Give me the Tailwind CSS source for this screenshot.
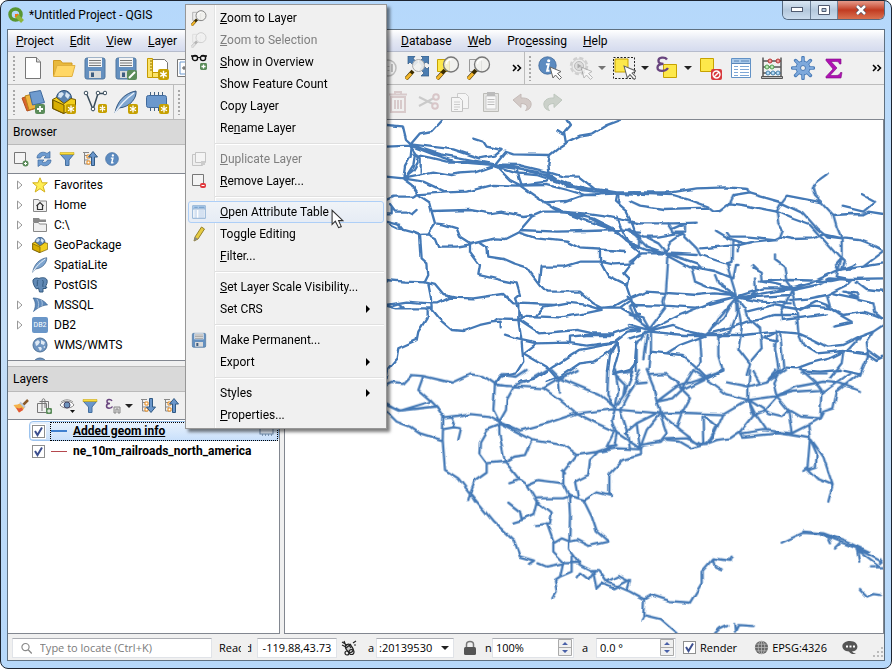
<!DOCTYPE html>
<html lang="en">
<head>
<meta charset="UTF-8" />
<title>*Untitled Project - QGIS</title>
<script src="https://cdn.jsdelivr.net/npm/@tailwindcss/browser@4"></script>
</head>
<body class="h-screen overflow-hidden bg-white text-black text-[12px] leading-4 font-[Roboto,sans-serif]">

<!-- icon library -->
<svg class="hidden">
  <symbol id="star-badge" viewBox="0 0 10 10"><rect width="10" height="10" rx="2" fill="#c6a000"/><path d="M5 1.500v7M2 3.200l6 3.600M8 3.200L2 6.800" stroke="#fff" stroke-width="1.300"/></symbol>
  <symbol id="plus-badge" viewBox="0 0 10 10"><rect width="10" height="10" rx="2" fill="#5b8c5a"/><path d="M5 2v6M2 5h6" stroke="#fff" stroke-width="1.800"/></symbol>
  <symbol id="new" viewBox="0 0 24 24"><path d="M4.500 1.500h11l4 4.500v16.500h-15z" fill="#fff" stroke="#777"/><path d="M15.500 1.500V6h4" fill="#ddd" stroke="#777"/></symbol>
  <symbol id="open" viewBox="0 0 24 24"><path d="M1.500 20V4.500h7l2 2.500h9.500v3" fill="#e8b93c" stroke="#d09a22"/><path d="M1.500 20.500L5 9.500h18L20 20.500z" fill="#ffd766" stroke="#e0b040"/></symbol>
  <symbol id="save" viewBox="0 0 24 24"><rect x="2" y="2" width="20" height="21" rx="2" fill="#6490c0" stroke="#50779f"/><path d="M5 2h14v9H5z" fill="#f4f4f4"/><path d="M6 4.500h12M6 7h12M6 9.500h12" stroke="#777"/><path d="M6 15h12v7H6z" fill="#dadada"/><path d="M8 16.500h3v4.500H8z" fill="#3f5d80"/></symbol>
  <symbol id="saveas" viewBox="0 0 24 24"><use href="#save"/><rect x="13" y="14" width="10" height="10" rx="2" fill="#5b8c5a"/><path d="M15 22l6-6" stroke="#fff" stroke-width="2"/></symbol>
  <symbol id="newlayout" viewBox="0 0 24 24"><path d="M7.500 3.500h12l3 3v13h-15z" fill="#fff" stroke="#777"/><path d="M2.500 2.500h5v19h-5z" fill="#fbe36a" stroke="#c49a00"/><path d="M7.500 16.500h8v5h-8z" fill="#fbe36a" stroke="#c49a00"/><path d="M5 5h2M5 8h2M5 11h2M5 14h2" stroke="#8a6d00"/><use href="#star-badge" x="13" y="13" width="11" height="11"/></symbol>
  <symbol id="layouts" viewBox="0 0 24 24"><path d="M1.500 3.500h20v17h-20z" fill="#fff" stroke="#777"/><path d="M4 6h15v12H4z" fill="none" stroke="#6f9bd0"/><path d="M8 10v4M6 12h4" stroke="#555"/></symbol>
  <symbol id="datasource" viewBox="0 0 24 24"><path d="M1 8l11-3 4 13-10 3z" fill="#d9652c" stroke="#b24f1d"/><path d="M4 6l11-3 3 14-10 3z" fill="#f0b53e" stroke="#b78318"/><path d="M8.500 2.500l11-2 4 12-12 2.500z" fill="#6f9bcf" stroke="#3f699c"/><use href="#plus-badge" x="14" y="14" width="10" height="10"/></symbol>
  <symbol id="geopackage" viewBox="0 0 24 24"><circle cx="12" cy="8" r="7.500" fill="#5b82ae" stroke="#2d4f77"/><path d="M7 3l3-1 2 2-3 4-3-1zM14 2l4 3-2 4-3-3z" fill="#d7e5f3"/><path d="M.5 9.500l4-2 7.500 6 7-5 4.500 1v9l-12 5-11-5z" fill="#f2cf1d" stroke="#6f5600"/><path d="M1 10l11 5v8.500l-11-5z" fill="#d8ae00" stroke="#6f5600"/></symbol>
  <symbol id="newgeo" viewBox="0 0 24 24"><use href="#geopackage"/><use href="#star-badge" x="14" y="14" width="10" height="10"/></symbol>
  <symbol id="vector" viewBox="0 0 24 24"><path d="M3.500 3.500L10 19.500L15 3.500H22" fill="none" stroke="#3a4d5c" stroke-width="1.500"/><g fill="#fff" stroke="#3a4d5c"><circle cx="3" cy="3" r="1.800"/><circle cx="10" cy="19" r="1.800"/><circle cx="15" cy="3" r="1.800"/><circle cx="22" cy="3" r="1.800"/></g><use href="#star-badge" x="15" y="14" width="9" height="9"/></symbol>
  <symbol id="feather" viewBox="0 0 24 24"><path d="M1 23C3 11 11 3 22 1c1 6-5 16-17 17z" fill="#7fa6d0" stroke="#31557f"/><path d="M1 23C7 13 13 8 20 3" stroke="#e9f1fa" fill="none" stroke-width="1.500"/></symbol>
  <symbol id="newfeather" viewBox="0 0 24 24"><use href="#feather"/><use href="#star-badge" x="14" y="14" width="10" height="10"/></symbol>
  <symbol id="memory" viewBox="0 0 24 24"><path d="M5.500 2v19M9.500 2v19M13.500 2v19M17.500 2v19" stroke="#44617f"/><rect x="1.500" y="5.500" width="20" height="12" rx="2" fill="#6b98cd" stroke="#3f699c"/><use href="#star-badge" x="14" y="14" width="10" height="10"/></symbol>
  <symbol id="lens" viewBox="0 0 24 24"><path d="M1 23l8-9" stroke="#3a2c00" stroke-width="4"/><path d="M1 23l5-5.500" stroke="#f4b72a" stroke-width="3"/><circle cx="15" cy="8.500" r="7.500" fill="#f1f1ee" fill-opacity=".8" stroke="#777" stroke-width="1.300"/><path d="M10.500 8c0-3 2-4.500 5-4.500" stroke="#fff" fill="none" stroke-width="1.500"/></symbol>
  <symbol id="zoomfull" viewBox="0 0 24 24"><path d="M3 0h7L8 3l5 3-4 4-4-4-2 2zM24 0v8l-3-2-4 4-3-4 4-4-2-2zM24 20h-8l3-3-4-4 3-4 4 4 2-2z" fill="#4c7db1" stroke="#315983" stroke-width=".7"/><path d="M1 23l7-8" stroke="#3a2c00" stroke-width="4"/><path d="M1 23l5-5.500" stroke="#f4b72a" stroke-width="3"/><circle cx="13.500" cy="9.500" r="6" fill="#f1f1ee" fill-opacity=".9" stroke="#aaa"/></symbol>
  <symbol id="zoomsel" viewBox="0 0 24 24"><path d="M1.500 3.500h12v12h-12z" fill="#fde84a" stroke="#c7a200"/><use href="#lens"/></symbol>
  <symbol id="zoomlayer" viewBox="0 0 24 24"><path d="M2.500 3.500h12v12h-12z" fill="#eee" stroke="#999"/><use href="#lens"/></symbol>
  <symbol id="one" viewBox="0 0 24 24"><circle cx="14" cy="12" r="8" fill="#eee" stroke="#bbb" stroke-width="1.500"/><path d="M11 8v8M18 8v8M14.500 10v1M14.500 14v1" stroke="#bbb" stroke-width="2"/></symbol>
  <symbol id="pointer" viewBox="0 0 12 18"><path d="M1 1v13l3-3 3 6 2.500-1-2.500-5.500h4z" fill="#fff" stroke="#333"/></symbol>
  <symbol id="pointer2" viewBox="0 0 14 14"><path d="M1 1l3 11 2.500-3 4 4.500 2-2L8.500 7.500 12 5.500z" fill="#fff" stroke="#666"/></symbol>
  <symbol id="info" viewBox="0 0 24 24"><circle cx="12" cy="12" r="11" fill="#5c8bc0" stroke="#40699b"/><circle cx="13.500" cy="6" r="2" fill="#fff"/><path d="M10 10.500h3.500l-2 8h3" fill="none" stroke="#fff" stroke-width="2.500"/></symbol>
  <symbol id="identify" viewBox="0 0 24 24"><use href="#info" width="19" height="19"/><use href="#pointer2" x="11" y="10" width="14" height="14"/></symbol>
  <symbol id="cog" viewBox="0 0 24 24"><path d="M12 1.500v21M1.500 12h21M4.600 4.600l14.800 14.800M19.400 4.600L4.600 19.400" stroke="#4a7cb8" stroke-width="3.500" stroke-linecap="round"/><circle cx="12" cy="12" r="7" fill="#7ea9dc" stroke="#4a7cb8"/><path d="M12 2v20M2 12h20M5 5l14 14M19 5L5 19" stroke="#7ea9dc" stroke-width="1.800" stroke-linecap="round"/><circle cx="12" cy="12" r="2.500" fill="#efefef" stroke="#4a7cb8"/></symbol>
  <symbol id="action" viewBox="0 0 24 24"><circle cx="10" cy="10" r="8" fill="#ececec" stroke="#cfcfcf" stroke-width="2.500" stroke-dasharray="4 2.300"/><circle cx="10" cy="10" r="7" fill="#ebebeb" stroke="#cfcfcf"/><circle cx="10" cy="10" r="4.500" fill="#ddd" stroke="#bbb"/><path d="M8.500 7.500l4 2.500-4 2.500z" fill="#aaa"/><g opacity=".4"><use href="#pointer2" x="11" y="10" width="14" height="14"/></g></symbol>
  <symbol id="select" viewBox="0 0 24 24"><path d="M1.500 1.500h21v21h-21z" fill="none" stroke="#222" stroke-dasharray="2 1.500"/><path d="M3 3h13v13H3z" fill="#fde84a" stroke="#c7a200"/><use href="#pointer2" x="11" y="9" width="15" height="15"/></symbol>
  <symbol id="expr" viewBox="0 0 24 24"><path d="M8.500 8.500h13v13h-13z" fill="#fde84a" stroke="#c7a200"/><path d="M12 3.500c-2-3-9-2.500-8.500 1.500 0 2 2 2.800 5 2.800-4 0-6 1.200-6 3.700 0 4.500 8 4.500 10.500.5" fill="none" stroke="#68447e" stroke-width="2.300"/></symbol>
  <symbol id="deselect" viewBox="0 0 24 24"><path d="M2.500 2.500h13v13h-13z" fill="#fde84a" stroke="#c7a200"/><rect x="13" y="13" width="11" height="11" rx="2" fill="#d8393d"/><circle cx="18.500" cy="18.500" r="3.500" fill="none" stroke="#fff" stroke-width="1.400"/><path d="M16 21l5-5" stroke="#fff" stroke-width="1.400"/></symbol>
  <symbol id="table" viewBox="0 0 24 24"><path d="M2.500 2.500h19v19h-19z" fill="#fff" stroke="#6292c6"/><path d="M3 3h18v4H3z" fill="#a9c9ea"/><path d="M3 7.500h18M5 5h5M12 5h8" stroke="#5a86b8"/><path d="M5 10.500h4M11 10.500h9M5 13.500h4M11 13.500h9M5 16.500h4M11 16.500h9M5 19.500h4M11 19.500h9" stroke="#7ea7d6"/></symbol>
  <symbol id="abacus" viewBox="0 0 24 24"><path d="M3 1.500v19M21 1.500v19M3 5h18M3 11h18M3 17h18" stroke="#555" stroke-width="1.500"/><path d="M1.500 20.500h21v2h-21z" fill="#bbb" stroke="#555"/><g fill="#f09a9a" stroke="#b43434"><circle cx="10" cy="5" r="2"/><circle cx="18" cy="5" r="2"/></g><g fill="#bdeabb" stroke="#4f9c4d"><circle cx="7" cy="11" r="2"/><circle cx="12" cy="11" r="2"/></g><g fill="#b8dcf5" stroke="#4783b0"><circle cx="8" cy="17" r="2"/><circle cx="13" cy="17" r="2"/><circle cx="18" cy="17" r="2"/></g></symbol>
  <symbol id="sigma" viewBox="0 0 24 24"><path d="M4 3h15v5h-1.500c-.5-2-1.500-2.500-4-2.500H9l6 6.500-7 7.500h6c3 0 3.500-1 4.500-3H20L19 22H4v-1.500L11 13 4 4.500z" fill="#b012b4" stroke="#7c0c80" stroke-width=".6"/></symbol>
  <symbol id="trash" viewBox="0 0 24 24"><path d="M5 7h14v15H5zM3 4.500h18M9 4V2h6v2M9 10v9M12 10v9M15 10v9" fill="none" stroke="#d8cacb" stroke-width="2"/></symbol>
  <symbol id="cut" viewBox="0 0 24 24"><path d="M2 7l14 7M2 16l15-8" stroke="#cacaca" stroke-width="2"/><g fill="none" stroke="#d8c6c8" stroke-width="2"><circle cx="19" cy="7" r="2.800"/><circle cx="18" cy="16" r="2.800"/></g></symbol>
  <symbol id="copy" viewBox="0 0 24 24"><path d="M9.500 3.500h8l3 3v12h-11z" fill="#f5f5f5" stroke="#ccc"/><path d="M3.500 7.500h8l3 3v11h-11z" fill="#f5f5f5" stroke="#c2c2c2"/><path d="M6 12h6M6 14.500h6M6 17h6M6 19.500h4" stroke="#ccc"/></symbol>
  <symbol id="paste" viewBox="0 0 24 24"><path d="M4.500 3.500h15v18h-15z" fill="#e4e4e2" stroke="#bcbcb8"/><path d="M7 6h10v13H7z" fill="#f8f8f8" stroke="#ccc"/><path d="M8 2h8v4H8z" fill="#bbb"/><path d="M8.500 9.500h7M8.500 12h7M8.500 14.500h7" stroke="#bbb"/></symbol>
  <symbol id="undo" viewBox="0 0 24 24"><path d="M3 10l8-6v4c7-.5 11 3 10 7.500-.5 3-3 4.500-5.500 5 3-3 2-7-4.500-7v4z" fill="#d3cac7" stroke="#c5bbb8"/></symbol>
  <symbol id="redo" viewBox="0 0 24 24"><path d="M21 10l-8-6v4c-7-.5-11 3-10 7.500.5 3 3 4.500 5.500 5-3-3-2-7 4.500-7v4z" fill="#cbd1ca" stroke="#bec7be"/></symbol>
  <symbol id="addbox" viewBox="0 0 16 16"><path d="M1.500 1.500h11v11h-11z" fill="#f4f4f4" stroke="#777"/><circle cx="12.500" cy="12.500" r="3" fill="#5b8c5a"/><path d="M12.500 11v3M11 12.500h3" stroke="#fff"/></symbol>
  <symbol id="rembox" viewBox="0 0 16 16"><path d="M1.500 1.500h11v11h-11z" fill="#f4f4f4" stroke="#777"/><rect x="9" y="10" width="6" height="5" rx="2" fill="#e0383d"/><path d="M10.500 12.500h3" stroke="#fff"/></symbol>
  <symbol id="dupbox" viewBox="0 0 16 16"><path d="M1.500 3.500h10v11h-10z" fill="#eee" stroke="#c4c4c4"/><path d="M4.500 1.500h10v10h-10z" fill="#f4f4f4" stroke="#c4c4c4"/><path d="M10 10h4v4h-4z" fill="#ccc"/></symbol>
  <symbol id="refresh" viewBox="0 0 16 16"><path d="M1 7c0-5 6-7.500 10-4.500L14 .5V7H8l2-2C7.500 4 5 5 4.500 7zM15 9c0 5-6 7.500-10 4.500l-3 2V9h6l-2 2c2.500 1 5 0 5.500-2z" fill="#6d9bd0" stroke="#3c699e" stroke-width=".7"/></symbol>
  <symbol id="filter" viewBox="0 0 16 16"><path d="M1 3h14L10 9v5.500H6.500V9z" fill="#6a96cb" stroke="#44709f"/><path d="M1 1.500h14v2H1z" fill="#fbdc3c" stroke="#c5a000" stroke-width=".5"/></symbol>
  <symbol id="collapse" viewBox="0 0 16 16"><path d="M2.500 1v12h5M2.500 4.500h4M2.500 9h4M1 1.500h6" fill="none" stroke="#888"/><path d="M5 4h3v3H5zM5 10h3v3H5z" fill="#fff" stroke="#e88a1a"/><path d="M11 .5L15.500 6h-3v8.500h-3V6h-3z" fill="#6a96cb" stroke="#315983"/></symbol>
  <symbol id="expand" viewBox="0 0 16 16"><path d="M2.500 1v12h5M2.500 4.500h4M2.500 9h4M1 1.500h6" fill="none" stroke="#888"/><path d="M5 4h3v3H5zM5 10h3v3H5z" fill="#fff" stroke="#e88a1a"/><path d="M11 14.500L15.500 9h-3V.5h-3V9h-3z" fill="#6a96cb" stroke="#315983"/></symbol>
  <symbol id="star" viewBox="0 0 16 16"><path d="M8 .8l2.100 5h5.200l-4.200 3.500 1.700 5.700L8 11.700 3.200 15l1.700-5.700L.7 5.800h5.200z" fill="#ffee54" stroke="#d3b01b"/></symbol>
  <symbol id="home" viewBox="0 0 16 16"><path d="M1.500 14.500v-12h5l1 1.500h7v10.500z" fill="#f0f0f0" stroke="#888"/><path d="M4.500 9L8 5.500 11.500 9M5.500 8.500v4h5v-4" fill="none" stroke="#333" stroke-width="1.200"/></symbol>
  <symbol id="folder" viewBox="0 0 16 16"><path d="M1 1h6l1 1.500h6V5H1z" fill="#888"/><path d="M1.500 14.500v-9h5l1 1.500h7v7.500z" fill="#f0f0f0" stroke="#888"/></symbol>
  <symbol id="elephant" viewBox="0 0 16 16"><path d="M1 3c1-2 4-2.500 6-1.500C10 0 14 .5 15 3c.7 2-.3 5-2 7h2l-1 1.500h-3V15H7.500l-1-4-2 1C2.500 10 .5 6 1 3z" fill="#6189b5" stroke="#33597f"/><path d="M6 3C4.500 5 6 7 5 9M10.500 3c2 2-.5 4 .5 7" fill="none" stroke="#33597f"/></symbol>
  <symbol id="mssql" viewBox="0 0 16 16"><path d="M1 1c5 0 11 2 14.500 7-4 0-9 2-14 6.500C4 10 4 5 1 1z" fill="#5f8abb" stroke="#3a628f" stroke-width=".7"/><path d="M5 2c2 3 2 6 1 9M9 3c1.500 2 1.500 4 .8 6" fill="none" stroke="#bcd0e6" stroke-width=".8"/></symbol>
  <symbol id="globe" viewBox="0 0 16 16"><circle cx="8" cy="8" r="7" fill="#7096c2" stroke="#4d7198"/><path d="M3 5l3-2 2 2-2 3-2 1zM9 3l4 2-1 3-3-1zM6 10l3 0 1 2-2 2zM11 10l2-1 0 2z" fill="#e0eaf4"/></symbol>
  <symbol id="brush" viewBox="0 0 16 16"><path d="M10 7l5-5" stroke="#8a5a2a" stroke-width="2.500"/><path d="M.5 7l4-.5L8 5l4 4-2 3-4 2.500z" fill="#f4b24a"/><path d="M3 9.500l3 1 3-1 1 2.500-4 2.500z" fill="#e0563c"/><path d="M7 4.500l5 5" stroke="#b9c8d8" stroke-width="2"/></symbol>
  <symbol id="group" viewBox="0 0 16 16"><path d="M1.500 5.500h9v9h-9zM3.500 3.500h9v9M6 13V3c0-3 3-3 3 0v7" fill="none" stroke="#777"/><use href="#plus-badge" x="10" y="10" width="6" height="6"/></symbol>
  <symbol id="eye" viewBox="0 0 16 16"><path d="M1 7c3-5 11-5 14 0-3 4-11 4-14 0z" fill="#fff" stroke="#888"/><circle cx="8" cy="7" r="3" fill="#6d93bd" stroke="#446"/><path d="M2 4c4-3 8-3 12 0" fill="none" stroke="#999"/><path d="M11 12h5l-2.500 3z" fill="#111"/></symbol>
  <symbol id="exprfilter" viewBox="0 0 16 16"><path d="M7 3C6 1 1.500 1 2 3.500 2 5 4 5.500 5 5.500 3 5.500 1.500 6.500 1.500 8c0 3 5 2.500 6 .5" fill="none" stroke="#68447e" stroke-width="1.500"/><path d="M9 15V9h6v6h-2v-4h-2v4z" fill="#ddd" stroke="#888"/></symbol>
  <symbol id="pencil" viewBox="0 0 16 16"><path d="M4 11L10.500 1l3 2L7 13l-4 2z" fill="#e6cb42" stroke="#94812b"/><path d="M4 11l3 2-4 2z" fill="#888"/></symbol>
  <symbol id="glasses" viewBox="0 0 16 16"><path d="M0 2h6M10 2h6" stroke="#111" stroke-width="1.500"/><circle cx="4" cy="4" r="2.600" fill="none" stroke="#111" stroke-width="1.400"/><circle cx="12" cy="4" r="2.600" fill="none" stroke="#111" stroke-width="1.400"/><path d="M6.500 3.500h3" stroke="#111"/><use href="#plus-badge" x="9" y="9" width="7" height="7"/></symbol>
  <symbol id="down" viewBox="0 0 8 8"><path d="M0 2h8L4 6z" fill="#222"/></symbol>
  <symbol id="right" viewBox="0 0 8 8"><path d="M2 0v8l4-4z" fill="#000"/></symbol>
  <symbol id="twist" viewBox="0 0 8 10"><path d="M1.500 1v8l4.500-4z" fill="#fff" stroke="#999"/></symbol>
  <symbol id="tick" viewBox="0 0 13 13"><path d="M3 6l2.500 4L10 2.500" fill="none" stroke="#3c4f8f" stroke-width="2"/></symbol>
  <symbol id="more" viewBox="0 0 10 8"><path d="M1 1l3 3-3 3M5.500 1l3 3-3 3" fill="none" stroke="#000" stroke-width="1.500"/></symbol>
</svg>

<div class="relative flex h-full flex-col rounded-lg border border-[#1c2430] bg-linear-to-b from-[#b5d8fb] via-[#c4def7] to-[#b6d8fa] px-[6px] pb-[7px]">

  <!-- title bar -->
  <header class="flex h-[28px] shrink-0 items-center">
    <svg class="ml-px size-4" viewBox="0 0 16 16"><circle cx="7.500" cy="7.500" r="5.500" fill="none" stroke="#589632" stroke-width="3.500"/><path d="M8 8l6.500 6.500" stroke="#8cb63c" stroke-width="4"/><path d="M7 7h4l-4 4z" fill="#ee7913"/></svg>
    <h1 class="ml-[5px]">*Untitled Project - QGIS</h1>
    <div class="ml-auto flex h-[19px] self-start overflow-hidden rounded-b-md border border-t-0 border-[#55687e]">
      <button aria-label="Minimize" class="grid w-[28px] place-items-center border-r border-[#6d8198] bg-linear-to-b from-[#dbe8f4] via-[#b4c8dc] to-[#cbdcee]"><svg class="h-[6px] w-[12px]"><rect x=".5" y=".5" width="11" height="4" fill="#fff" stroke="#515b70"/></svg></button>
      <button aria-label="Maximize" class="grid w-[27px] place-items-center border-r border-[#6d8198] bg-linear-to-b from-[#dbe8f4] via-[#b4c8dc] to-[#cbdcee]"><svg class="h-[10px] w-[12px]"><path d="M.5.5h11v9H.5zM4 3.500h4v3H4z" fill="#fff" stroke="#515b70" fill-rule="evenodd"/></svg></button>
      <button aria-label="Close" class="grid w-[46px] place-items-center bg-linear-to-b from-[#e59a8a] via-[#c13a20] to-[#d9704f]"><svg class="h-[10px] w-[12px]" viewBox="0 0 12 10"><path d="M2 1l8 8M10 1L2 9" stroke="#4b4858" stroke-width="4"/><path d="M2 1l8 8M10 1L2 9" stroke="#fff" stroke-width="2.500"/></svg></button>
    </div>
  </header>

  <div class="flex min-h-0 grow flex-col border border-[#5f7080] bg-[#f0f0f0]">
    <!-- menu bar -->
    <nav class="flex h-[22px] shrink-0 items-center border-b border-[#b6bccc] bg-linear-to-b from-white via-[#e4e8f3] to-[#d5dbee] pl-2">
      <div class="flex w-[385px] gap-4">
        <button><u>P</u>roject</button>
        <button><u>E</u>dit</button>
        <button><u>V</u>iew</button>
        <button><u>L</u>ayer</button>
      </div>
      <div class="flex gap-4">
        <button><u>D</u>atabase</button>
        <button><u>W</u>eb</button>
        <button>Pro<u>c</u>essing</button>
        <button><u>H</u>elp</button>
      </div>
    </nav>

    <!-- toolbars -->
    <div class="flex h-[33px] shrink-0 items-center border-b border-[#bcbcbc]">
      <i class="ml-1 mr-px h-[26px] w-1 bg-[radial-gradient(circle,#a8a8a8_1px,transparent_1px)] bg-size-[4px_4px]"></i>
      <div class="flex w-[353px]">
        <button aria-label="New" class="grid w-[31px] place-items-center"><svg class="size-6"><use href="#new"/></svg></button>
        <button aria-label="Open" class="grid w-[31px] place-items-center"><svg class="size-6"><use href="#open"/></svg></button>
        <button aria-label="Save" class="grid w-[31px] place-items-center"><svg class="size-6"><use href="#save"/></svg></button>
        <button aria-label="Save as" class="grid w-[31px] place-items-center"><svg class="size-6"><use href="#saveas"/></svg></button>
        <button aria-label="New layout" class="grid w-[31px] place-items-center"><svg class="size-6"><use href="#newlayout"/></svg></button>
        <button aria-label="Layouts" class="grid w-[31px] place-items-center"><svg class="size-6"><use href="#layouts"/></svg></button>
      </div>
      <div class="flex">
        <button aria-label="Native resolution" class="grid w-[31px] place-items-center"><svg class="size-6"><use href="#one"/></svg></button>
        <button aria-label="Zoom full" class="grid w-[31px] place-items-center"><svg class="size-6"><use href="#zoomfull"/></svg></button>
        <button aria-label="Zoom to selection" class="grid w-[31px] place-items-center"><svg class="size-6"><use href="#zoomsel"/></svg></button>
        <button aria-label="Zoom to layer" class="grid w-[31px] place-items-center"><svg class="size-6"><use href="#zoomlayer"/></svg></button>
      </div>
      <button aria-label="More" class="ml-[18px]"><svg class="h-2 w-[10px]"><use href="#more"/></svg></button>
      <i class="ml-[2px] h-full w-px bg-[#bcbcbc]"></i>
      <i class="ml-[3px] mr-[2px] h-[26px] w-1 bg-[radial-gradient(circle,#a8a8a8_1px,transparent_1px)] bg-size-[4px_4px]"></i>
      <div class="flex">
        <button aria-label="Identify" class="grid w-[31px] place-items-center"><svg class="size-6"><use href="#identify"/></svg></button>
        <button aria-label="Action" class="grid w-[31px] place-items-center"><svg class="size-6"><use href="#action"/></svg></button>
        <button aria-label="Action menu" class="grid w-[12px] place-items-center opacity-60"><svg class="size-2"><use href="#down"/></svg></button>
        <button aria-label="Select" class="grid w-[31px] place-items-center"><svg class="size-6"><use href="#select"/></svg></button>
        <button aria-label="Select menu" class="grid w-[12px] place-items-center"><svg class="size-2"><use href="#down"/></svg></button>
        <button aria-label="Select by expression" class="grid w-[31px] place-items-center"><svg class="size-6"><use href="#expr"/></svg></button>
        <button aria-label="Expression menu" class="grid w-[12px] place-items-center"><svg class="size-2"><use href="#down"/></svg></button>
        <button aria-label="Deselect" class="grid w-[31px] place-items-center"><svg class="size-6"><use href="#deselect"/></svg></button>
        <button aria-label="Attribute table" class="grid w-[31px] place-items-center"><svg class="size-6"><use href="#table"/></svg></button>
        <button aria-label="Field calculator" class="grid w-[31px] place-items-center"><svg class="size-6"><use href="#abacus"/></svg></button>
        <button aria-label="Processing toolbox" class="grid w-[31px] place-items-center"><svg class="size-6"><use href="#cog"/></svg></button>
        <button aria-label="Statistics" class="grid w-[31px] place-items-center"><svg class="size-6"><use href="#sigma"/></svg></button>
      </div>
      <button aria-label="More" class="ml-auto mr-[2px]"><svg class="h-2 w-[10px]"><use href="#more"/></svg></button>
    </div>
    <div class="flex h-[34px] shrink-0 items-center">
      <i class="ml-1 mr-px h-[26px] w-1 bg-[radial-gradient(circle,#a8a8a8_1px,transparent_1px)] bg-size-[4px_4px]"></i>
      <div class="flex">
        <button aria-label="Data source manager" class="grid w-[31px] place-items-center"><svg class="size-6"><use href="#datasource"/></svg></button>
        <button aria-label="New GeoPackage" class="grid w-[31px] place-items-center"><svg class="size-6"><use href="#newgeo"/></svg></button>
        <button aria-label="New shapefile" class="grid w-[31px] place-items-center"><svg class="size-6"><use href="#vector"/></svg></button>
        <button aria-label="New SpatiaLite" class="grid w-[31px] place-items-center"><svg class="size-6"><use href="#newfeather"/></svg></button>
        <button aria-label="New scratch layer" class="grid w-[31px] place-items-center"><svg class="size-6"><use href="#memory"/></svg></button>
      </div>
      <i class="ml-px h-full w-px bg-[#bcbcbc]"></i>
      <i class="ml-[3px] h-[26px] w-1 bg-[radial-gradient(circle,#a8a8a8_1px,transparent_1px)] bg-size-[4px_4px]"></i>
      <div class="ml-[201px] flex">
        <button disabled aria-label="Delete" class="grid w-[31px] place-items-center"><svg class="size-6"><use href="#trash"/></svg></button>
        <button disabled aria-label="Cut" class="grid w-[31px] place-items-center"><svg class="size-6"><use href="#cut"/></svg></button>
        <button disabled aria-label="Copy" class="grid w-[31px] place-items-center"><svg class="size-6"><use href="#copy"/></svg></button>
        <button disabled aria-label="Paste" class="grid w-[31px] place-items-center"><svg class="size-6"><use href="#paste"/></svg></button>
        <button disabled aria-label="Undo" class="grid w-[31px] place-items-center"><svg class="size-6"><use href="#undo"/></svg></button>
        <button disabled aria-label="Redo" class="grid w-[31px] place-items-center"><svg class="size-6"><use href="#redo"/></svg></button>
      </div>
    </div>

    <main class="flex min-h-0 grow gap-1">
      <!-- docks -->
      <aside class="flex w-[272px] shrink-0 flex-col">
        <section class="flex h-[242px] shrink-0 flex-col">
          <h2 class="flex h-[26px] shrink-0 items-center border-t border-b border-[#bababa] bg-[#d9d9d9] pl-[5px]">Browser</h2>
          <div class="flex h-[28px] shrink-0 items-center gap-[7px] pl-[5px]">
            <button aria-label="Add layer"><svg class="size-4"><use href="#addbox"/></svg></button>
            <button aria-label="Refresh"><svg class="size-4"><use href="#refresh"/></svg></button>
            <button aria-label="Filter"><svg class="size-4"><use href="#filter"/></svg></button>
            <button aria-label="Collapse all"><svg class="size-4"><use href="#collapse"/></svg></button>
            <button aria-label="Properties"><svg class="size-[14px]"><use href="#info"/></svg></button>
          </div>
          <ul class="min-h-0 grow overflow-hidden border border-l-0 border-[#828790] bg-white pt-px">
            <li class="flex h-5 items-center pl-2"><svg class="mr-[8px] h-[10px] w-2"><use href="#twist"/></svg><svg class="mr-[6px] size-4"><use href="#star"/></svg>Favorites</li>
            <li class="flex h-5 items-center pl-2"><svg class="mr-[8px] h-[10px] w-2"><use href="#twist"/></svg><svg class="mr-[6px] size-4"><use href="#home"/></svg>Home</li>
            <li class="flex h-5 items-center pl-2"><svg class="mr-[8px] h-[10px] w-2"><use href="#twist"/></svg><svg class="mr-[6px] size-4"><use href="#folder"/></svg>C:\</li>
            <li class="flex h-5 items-center pl-2"><svg class="mr-[8px] h-[10px] w-2"><use href="#twist"/></svg><svg class="mr-[6px] size-4"><use href="#geopackage"/></svg>GeoPackage</li>
            <li class="flex h-5 items-center pl-6"><svg class="mr-[6px] size-4"><use href="#feather"/></svg>SpatiaLite</li>
            <li class="flex h-5 items-center pl-6"><svg class="mr-[6px] size-4"><use href="#elephant"/></svg>PostGIS</li>
            <li class="flex h-5 items-center pl-2"><svg class="mr-[8px] h-[10px] w-2"><use href="#twist"/></svg><svg class="mr-[6px] size-4"><use href="#mssql"/></svg>MSSQL</li>
            <li class="flex h-5 items-center pl-2"><svg class="mr-[8px] h-[10px] w-2"><use href="#twist"/></svg><span class="mr-[6px] grid size-4 place-items-center rounded-xs bg-[#6a96c8] text-[7px] leading-none text-white">DB2</span>DB2</li>
            <li class="flex h-5 items-center pl-6"><svg class="mr-[6px] size-4"><use href="#globe"/></svg>WMS/WMTS</li>
            <li class="flex h-5 items-center pl-6"><svg class="mr-[6px] size-4"><use href="#globe"/></svg></li>
          </ul>
        </section>
        <section class="mt-[5px] flex min-h-0 grow flex-col">
          <h2 class="flex h-[26px] shrink-0 items-center border-t border-b border-[#bababa] bg-[#d9d9d9] pl-[5px]">Layers</h2>
          <div class="flex h-[27px] shrink-0 items-center gap-[7px] pl-[5px]">
            <button aria-label="Style"><svg class="size-4"><use href="#brush"/></svg></button>
            <button aria-label="Add group"><svg class="size-4"><use href="#group"/></svg></button>
            <button aria-label="Visibility"><svg class="size-4"><use href="#eye"/></svg></button>
            <button aria-label="Filter"><svg class="size-4"><use href="#filter"/></svg></button>
            <button aria-label="Filter by expression" class="flex items-center gap-1"><svg class="size-4"><use href="#exprfilter"/></svg><svg class="size-2"><use href="#down"/></svg></button>
            <button aria-label="Expand all"><svg class="size-4"><use href="#expand"/></svg></button>
            <button aria-label="Collapse all"><svg class="size-4"><use href="#collapse"/></svg></button>
          </div>
          <ul class="min-h-0 grow border border-l-0 border-[#828790] bg-white pt-px pl-[21px] font-bold">
            <li class="flex h-5 items-center rounded-sm border border-[#9cc3ee] bg-linear-to-b from-[#e9f2fc] to-[#c9e0fb] pl-[2px]">
              <label class="grid size-[13px] place-items-center">
                <input type="checkbox" checked aria-label="Added geom info" class="size-[13px] appearance-none border border-[#8e8f8f] bg-white outline outline-white [grid-area:1/1]" />
                <svg class="size-[13px] [grid-area:1/1]"><use href="#tick"/></svg>
              </label>
              <div class="ml-[5px] flex h-[19px] grow items-center border border-dotted border-black">
                <i class="h-[2px] w-4 bg-[#3f80d0]"></i><span class="ml-[6px] underline">Added geom info</span>
                <svg class="ml-auto mr-[3px] h-3 w-[15px]" viewBox="0 0 15 12"><path d="M3.500 1v10M6.500 1v10M9.500 1v10M12.500 1v10" stroke="#7d97b5"/><rect x="1" y="2" width="13" height="7" fill="#dfe9f6" stroke="#6b86a6"/></svg>
              </div>
            </li>
            <li class="flex h-5 items-center pl-[3px]">
              <label class="grid size-[13px] place-items-center">
                <input type="checkbox" checked aria-label="ne_10m_railroads_north_america" class="size-[13px] appearance-none border border-[#8e8f8f] bg-white [grid-area:1/1]" />
                <svg class="size-[13px] [grid-area:1/1]"><use href="#tick"/></svg>
              </label>
              <i class="ml-[6px] h-px w-4 bg-[#b5484e]"></i><span class="ml-[6px]">ne_10m_railroads_north_america</span>
            </li>
          </ul>
        </section>
      </aside>

      <!-- map canvas -->
      <section class="min-w-0 grow border border-[#828790] bg-white">
        <svg class="size-full" viewBox="285 120 598 513" preserveAspectRatio="xMinYMin slice" fill="none" stroke="#4479b6" stroke-width="7" stroke-linejoin="round" stroke-linecap="round">
          <filter id="rough" filterUnits="userSpaceOnUse" x="285" y="120" width="598" height="513" color-interpolation-filters="sRGB">
            <feTurbulence type="fractalNoise" baseFrequency=".09" numOctaves="1" seed="4"/>
            <feDisplacementMap in="SourceGraphic" scale="5" xChannelSelector="R" yChannelSelector="G"/>
          </filter>
          <g filter="url(#rough)">
            <!-- north west -->
            <path transform="translate(380 115) scale(.3333)" d="M18 30L68 34 78 75 92 88 120 55 155 48 185 15M18 95L92 92M92 88L220 103 300 130 345 122 365 105 320 95 310 80 280 70M92 90L180 118 240 128 345 148M92 92L160 118 225 140 280 145 345 150M100 118L150 128 200 140 260 138 345 150M92 95L108 118 122 130 122 172M95 95L92 125 75 155 70 190M105 118L100 150 75 190M110 118L115 140 100 165 72 188L120 178 160 170 215 180 240 175 285 172 345 152M18 185L70 190 130 200 200 232M70 192L95 210 115 240 148 262 155 290 165 325 142 358 120 360M18 255L40 245 100 245 110 238 200 232 260 230 340 210 420 212M30 270L45 290 80 290 95 298 110 285M18 295L35 295 35 280M18 320L60 330 72 345 100 352 120 360M30 330L50 340 70 342 50 325M155 288L270 285 330 295 365 290 430 303 455 300M165 325L190 328 230 340 240 365 275 388M142 358L165 370 175 395 230 395 270 388 345 370 375 372 415 352 455 305 490 290 545 290 610 295 680 305 780 325M345 148L375 110 400 118 510 120 505 145 510 185 500 200 420 210 390 195 360 165 345 148M510 120L535 100 558 85 552 50 570 30 560 15M532 48L548 58M558 82L600 62 640 55 680 30 720 15M345 148L415 150 500 170 550 185 600 185 645 220M345 150L420 160 510 180 560 215 645 222 710 232 780 232M345 152L400 160 480 175 560 205 640 225M345 155L410 175 470 180 560 210 600 225 700 235 780 240M410 165L425 210M420 212L500 210 560 225 610 240 780 232M420 212L460 240 520 280 600 310 700 345 780 350M490 262L560 258 610 240 650 240 700 232M520 280L560 295 640 310 700 340 740 380 780 395M540 295L610 300 700 345 765 400M710 235L705 260 740 290 755 320 765 350 780 370M715 232L715 265M710 305L725 345 745 380 780 410M420 345L530 350 620 348 720 345M415 352L470 370 560 380 600 400 680 405 735 408M660 403L660 440 685 485 740 512M480 500L485 455 550 455 600 440 660 440 700 448 760 445M780 415L745 455 730 475 745 490 740 515 755 560 780 620M270 388L270 410 300 450 295 480 360 495 410 505 420 540 408 550 415 570 415 610M300 385L322 400 325 425 370 432 400 445 440 458 480 510 500 530 600 530 640 565 665 578M120 360L125 430 142 445 145 480 135 500M18 495L75 500 135 502 165 510 190 540 230 548M18 570L80 560 150 565 175 565 210 548 280 550 370 537 400 565M18 572L50 580 155 580M40 570L55 565 68 575 50 580M145 505L152 540 155 580 140 585 140 610 115 650 110 675 55 700 50 730 25 760 20 790M155 585L175 610 215 645 250 648 300 630 335 622 350 610 415 612M335 622L362 620 362 640M400 565L520 570 560 563 610 568 650 580 700 575 745 550 780 535M470 600L490 575 520 570M415 612L440 603 540 607 600 598 665 585M410 570L425 610M415 612L480 655 590 645 640 655 700 655 745 640 780 640M415 612L425 680 430 740 408 775 360 785 345 810M375 662L400 670 470 685 560 683 620 692 710 680M570 685L570 665 620 660 700 660M430 715L470 685M430 715L500 755 530 790M420 800L470 790 520 755 600 705 700 685 745 650 780 645M500 800L540 785 600 745 640 740 690 710 710 685M665 578L720 578 745 560 755 555M725 580L760 600 780 600M740 545L770 575M710 685L690 720 684 768M710 685L715 715 700 770M700 780L750 765 770 740M770 680L765 740 750 790"/>
            <!-- north east -->
            <path transform="translate(630 115) scale(.3333)" d="M0 232L125 232 200 220 290 217 355 222 360 235 310 243 300 265 270 288 250 290 235 278 100 282 30 272 0 258M0 235L130 240 180 255 235 275M300 265L340 270 440 290M360 235L455 262M440 290L455 262 470 242 575 262M590 178L560 200 548 220 555 243 575 262 610 300 620 335 635 370 635 430 625 465M610 300L660 297 700 298 715 290 760 297M638 275L700 290 735 260 698 240M440 290L445 325 458 345 450 365 435 373M455 265L520 295 560 340 590 365 635 370M440 290L490 312 540 330 590 385 630 430M450 365L490 372 550 370 580 358 635 370 690 375 730 390 760 405M435 373L370 380 330 390 210 400M258 347L300 372 345 385M290 352L300 365 360 365 440 373M310 375L308 440 290 445 300 480 318 540M325 385L323 412M0 325L130 325 200 323M115 325L130 350 165 350 165 325 130 340M155 355L120 380 108 415M155 355L200 400 210 420 300 450M0 345L40 365 85 365 155 352M0 345L50 395 110 415M0 385L50 405 110 415M50 368L85 385 110 415 200 420M0 440L35 415 110 415 200 445 215 460 260 470 310 490M115 425L108 530 100 560 105 580 60 640M0 350L30 370 30 390M110 420L185 460 195 500 230 515 318 540M185 455L255 468 310 490M255 480L265 505 318 540M310 490L318 450 325 450M0 550L50 530 200 540 250 535 318 540M0 570L100 572 200 578 318 545 250 560 150 600 60 645M0 575L15 610 60 645M0 600L40 610 60 645M0 630L55 645M0 670L60 648 130 630 180 650 225 660M60 650L160 660 225 660M318 545L280 610 225 660M318 548L265 610 230 660M318 550L320 600 300 650 265 665M225 660L340 660 440 650 500 655M225 660L300 640 350 620 385 615 430 600 500 600M320 550L335 640 325 700 360 745 350 780M318 545L345 580 350 605 390 640 395 700 365 735M265 665L265 720 280 770M210 665L215 740 195 760M60 650L60 700 55 768M45 650L20 690 20 768M50 660L40 730M60 710L110 715 150 690 225 662M110 715L155 720 195 755 230 790 280 770M325 548L390 560 485 565M320 545L400 520 485 520M330 548L430 530 485 522M340 548L400 545 480 540M370 458L392 470 395 500 440 508 485 520M375 490L378 530 360 545M370 450L380 460M435 418L435 435 462 455 470 500 485 520 540 505 625 465M390 500L480 495 600 498 640 490M490 525L560 510 600 490 660 495M625 465L700 455 760 445M635 463L675 448M625 465L618 450 635 430 645 440 635 465M700 455L760 410M625 465L620 485 655 492 760 490M680 500L710 522 760 528M485 522L500 590 505 650M485 525L455 590 455 615 540 605 590 598M350 590L430 570 500 582 550 575 600 580M480 555L540 550 590 540 600 575M510 585L560 560 600 575M590 540L650 510 665 495M600 580L630 600 665 620 610 632M600 580L640 600 700 590 735 600 760 610M610 535L680 550 650 530M640 530L680 535 685 555 730 565 735 590 760 610M505 655L540 670 590 695 640 690 690 665 730 650M440 650L400 670 440 680M440 645L435 700 445 760M450 650L455 700 460 755M505 655L520 690 560 715 640 708 710 718M730 650L710 680 715 720 690 780M730 650L760 630M710 715L740 735 760 725M715 705L750 730M640 710L600 730 540 745 500 760 460 757 420 790M510 765L570 770 630 765M640 708L635 745 600 790M690 665L650 710M690 775L640 765"/>
            <!-- south -->
            <path transform="translate(380 370) scale(.3333)" d="M20 45L35 38 70 42 95 15 130 18 215 38 270 13 310 18 345 42 380 48M130 18L115 60 150 90 170 110 190 140M20 100L60 122 150 95M20 105L55 122 165 110M20 125L50 155 90 170 120 190 185 210M190 140L188 210 195 300 235 325 270 370M190 145L235 140 270 132 325 138 358 155M215 145L225 172 190 178M225 172L243 175 235 210M345 42L340 120 358 155M345 42L365 15 410 20 440 0M358 155L378 120 380 90 405 45 440 35 500 0M345 45L490 55 540 25 515 0M540 25L590 0M490 55L540 90 590 130 650 160 705 185M540 25L660 75 705 110M535 25L540 65M358 155L420 182 500 160 590 130 700 118M358 155L358 190 375 275M358 160L455 210 550 225 590 255 655 245 710 235 780 238M358 165L320 180 300 215 298 250 320 280 375 275M455 210L435 255 400 260 375 275M320 280L320 305 285 330 270 370M265 390L270 370 285 395M270 370L340 455 400 510 420 560 465 572 450 582M375 275L420 330 440 345 470 395M385 340L415 330M440 345L475 330 550 340M590 255L550 305 550 340 570 385M545 300L555 310M655 245L630 270 625 315 585 335 595 385M470 385L550 385 570 378 615 390 650 367 698 378M698 378L688 370 688 315 730 270 780 255 780 238M470 395L460 435 425 450 400 458M385 398L420 425 425 450M470 395L515 430 510 460 468 465M500 460L520 515 520 545 550 575M520 520L545 505 570 515 590 510 625 528 685 515 650 485 635 440 610 390M567 385L570 440 567 540 600 585 640 605M475 580L500 590 550 580 600 578M550 575L540 620 525 630 530 665 520 682M540 620L575 605 575 560M590 622L600 608 625 628 645 600M640 605L650 655 665 640 700 655 750 630M635 600L655 600 680 635 715 650 750 665 792 688M680 635L715 618 750 635 742 660M792 688L815 675 870 693 930 698 965 640 965 605 1000 565 1050 572M1000 570L1005 590 1025 598M1045 572L1055 560M792 688L790 735 840 747 890 790M785 748L792 735M1005 790L1020 775 1042 765M1063 762L1065 785 1075 765 1118 768M1205 518L1270 488 1320 492 1370 512 1430 535 1505 575M1270 485L1330 490 1400 515 1465 545 1440 545M1345 510L1350 520M1365 533L1380 518M1430 535L1438 575M1430 540L1500 592M1470 592L1510 592M1505 565L1500 580M1440 660L1460 680 1480 672 1500 675M705 0L715 60 705 120M685 0L682 75 705 110M705 10L760 5 735 70 715 100M700 10L735 45 730 75M780 0L760 50 740 80 720 120M765 38L800 35M800 0L820 50 830 95 840 130M830 95L880 85 905 60 940 0M830 95L890 50 970 25M805 15L860 12 890 35 905 60 930 85 905 130 890 170M970 25L1010 10 1030 0M940 0L975 25 1040 72 1105 90M970 30L905 62M700 118L840 130 900 128 1030 133 1105 90M705 118L695 150 710 190 705 220M720 120L740 180 750 235M705 185L780 235M650 245L710 225 680 230 700 190M735 190L770 160 830 130M770 160L780 235M840 130L800 180 780 235M840 130L860 190 840 215 780 225M840 130L900 180 960 225M850 208L920 205 970 225M860 212L900 215 935 235 970 225 968 140M975 140L1010 170 980 225M1030 133L1000 200 975 225M970 225L1010 210 1050 205 1080 185 1120 135 1105 90M1080 185L1090 200 1200 190 1290 205M1085 190L1150 180 1235 190 1285 165 1320 145M1105 90L1125 130 1160 180 1290 205M1120 135L1150 125 1190 80M1105 90L1105 50 1040 37M1105 50L1160 35 1190 0M1105 90L1190 78M1110 92L1170 130 1205 138 1225 120M1190 78L1225 120 1260 140 1320 145M1225 120L1235 190M1190 78L1180 40 1200 0M1190 78L1240 65 1320 60M1195 75L1250 50 1330 35 1380 40 1440 63M1320 145L1325 60 1310 40 1265 0M1320 145L1330 125 1360 115 1370 65 1440 10M1325 70L1410 10M1265 10L1340 10M1285 165L1290 205 1283 290 1270 300M1290 205L1310 250 1308 290 1283 298 1310 325 1358 345M1295 210L1330 260 1358 345 1345 395M1110 0L1105 50M1120 5L1140 40M1160 35L1215 0"/>
          </g>
        </svg>
      </section>
    </main>

    <!-- status bar -->
    <footer class="flex h-[26px] shrink-0 items-center pt-px font-['Open_Sans',sans-serif] text-[11px]">
      <label class="ml-1 flex h-5 w-[200px] shrink-0 items-center gap-2 border border-[#e0e3e8] border-t-[#abadb3] bg-white pl-2">
        <svg class="size-3" viewBox="0 0 12 12"><circle cx="5" cy="5" r="4" fill="none" stroke="#888" stroke-width="1.300"/><path d="M8 8l4 4" stroke="#888" stroke-width="1.500"/></svg>
        <input type="text" aria-label="Locate" placeholder="Type to locate (Ctrl+K)" class="w-full placeholder-[#7b7b7b] outline-none" />
      </label>
      <span class="ml-[7px] w-[22px] shrink-0 overflow-hidden">Read</span>
      <span class="ml-[7px] flex w-1 shrink-0 justify-end overflow-hidden">d</span>
      <input type="text" aria-label="Coordinate" value="-119.88,43.73" class="ml-[5px] h-5 w-[80px] border border-[#e0e3e8] border-t-[#abadb3] bg-white text-center" />
      <svg class="ml-1 size-4" viewBox="0 0 16 16" fill="none" stroke="#222" stroke-width="1.200"><path d="M1 2l5 3M1 5l4 2M3 1l2 5M12 3l3-2M13 5h2"/><rect x="5" y="4" width="6" height="9" rx="3" transform="rotate(-35 8 8)" fill="#ccc"/><path d="M5 8l5-4M8 5l2 3"/><circle cx="10.500" cy="12" r="2.500"/><circle cx="6" cy="13" r="2"/></svg>
      <span class="ml-[11px] w-[8px]">a</span>
      <label class="grid h-5 w-[78px] shrink-0 items-center border border-[#e0e3e8] border-t-[#abadb3] bg-white">
        <select aria-label="Scale" class="w-full appearance-none pl-[2px] [grid-area:1/1]"><option>:20139530</option></select>
        <svg class="pointer-events-none mr-1 size-2 justify-self-end [grid-area:1/1]"><use href="#down"/></svg>
      </label>
      <svg class="ml-[10px] h-4 w-3" viewBox="0 0 12 16"><path d="M2.500 8V4.500c0-4 7-4 7 0V8" fill="none" stroke="#777" stroke-width="1.500"/><rect y="7" width="12" height="8" rx="1.500" fill="#555"/></svg>
      <span class="ml-[9px] w-[7px]">n</span>
      <div class="flex h-5 w-[82px] shrink-0 items-center border border-[#e0e3e8] border-t-[#abadb3] bg-white">
        <input type="text" aria-label="Magnifier" value="100%" class="w-0 grow pl-[3px]" />
        <svg class="mr-px h-[17px] w-[14px]" viewBox="0 0 14 17"><path d="M.5.5h13v16H.5zM.5 8.500h13" fill="#f0f0f0" stroke="#aaa"/><path d="M4 6h6L7 3zM4 11h6l-3 3z" fill="#4960a8"/></svg>
      </div>
      <span class="ml-[8px] w-[14px]">a</span>
      <div class="flex h-5 w-[80px] shrink-0 items-center border border-[#e0e3e8] border-t-[#abadb3] bg-white">
        <input type="text" aria-label="Rotation" value="0.0 °" class="w-0 grow pl-[3px]" />
        <svg class="mr-px h-[17px] w-[14px]" viewBox="0 0 14 17"><path d="M.5.5h13v16H.5zM.5 8.500h13" fill="#f0f0f0" stroke="#aaa"/><path d="M4 6h6L7 3zM4 11h6l-3 3z" fill="#4960a8"/></svg>
      </div>
      <label class="ml-[7px] flex items-center gap-1">
        <span class="grid size-[13px]"><input type="checkbox" checked class="size-[13px] appearance-none border border-[#8e8f8f] bg-white [grid-area:1/1]" /><svg class="size-[13px] [grid-area:1/1]"><use href="#tick"/></svg></span>
        Render
      </label>
      <button class="ml-[17px] flex items-center gap-[3px]"><svg class="size-[15px]" viewBox="0 0 16 16"><circle cx="8" cy="8" r="7" fill="#666"/><path d="M1 8h14M8 1v14M2.500 4.500h11M2.500 11.500h11" stroke="#bbb" stroke-width=".8" fill="none"/><ellipse cx="8" cy="8" rx="3.500" ry="7" fill="none" stroke="#bbb" stroke-width=".8"/></svg>EPSG:4326</button>
      <button aria-label="Messages" class="ml-[15px]"><svg class="h-[15px] w-4" viewBox="0 0 16 15"><path d="M8 1c9 0 10 10 2 10.500 1 1 2 2 4 2-3 1.500-6 0-7-2C-2 11 -2 1 8 1z" fill="#555"/><path d="M4 6.500h2M7.500 6.500h2M11 6.500h2" stroke="#fff" stroke-width="1.800"/></svg></button>
      <svg class="ml-auto mt-2 size-3" viewBox="0 0 12 12"><path d="M9 1h2v2H9zM5 5h2v2H5zM9 5h2v2H9zM1 9h2v2H1zM5 9h2v2H5zM9 9h2v2H9z" fill="#bbb"/></svg>
    </footer>
  </div>

  <!-- layer context menu -->
  <div role="menu" class="absolute top-[3px] left-[184px] w-[202px] border border-[#979797] bg-[#f0f0f0] bg-[linear-gradient(90deg,transparent_28px,#e2e3e3_28px,#e2e3e3_29px,#fff_29px,#fff_30px,transparent_30px)] p-[2px] shadow-[3px_3px_3px_rgba(0,0,0,.5)]">
    <button role="menuitem" class="flex h-[22px] w-full items-center pl-[3px]"><svg class="mr-[13px] size-4"><use href="#zoomlayer"/></svg><span><u>Z</u>oom to Layer</span></button>
    <button role="menuitem" disabled class="flex h-[22px] w-full items-center pl-[3px] text-[#7f7f7f]"><svg class="mr-[13px] size-4 opacity-30 grayscale"><use href="#zoomlayer"/></svg><span><u>Z</u>oom to Selection</span></button>
    <button role="menuitem" class="flex h-[22px] w-full items-center pl-[3px]"><svg class="mr-[13px] size-4"><use href="#glasses"/></svg><span><u>S</u>how in Overview</span></button>
    <button role="menuitem" class="flex h-[22px] w-full items-center pl-[32px]">Show Feature Count</button>
    <button role="menuitem" class="flex h-[22px] w-full items-center pl-[32px]">Copy Layer</button>
    <button role="menuitem" class="flex h-[22px] w-full items-center pl-[32px]"><span>Re<u>n</u>ame Layer</span></button>
    <hr class="mt-1 mb-[3px] ml-[27px] border-t border-b border-[#e0e0e0] border-b-white" />
    <button role="menuitem" disabled class="flex h-[22px] w-full items-center pl-[3px] text-[#7f7f7f]"><svg class="mr-[13px] size-4"><use href="#dupbox"/></svg><span><u>D</u>uplicate Layer</span></button>
    <button role="menuitem" class="flex h-[22px] w-full items-center pl-[3px]"><svg class="mr-[13px] size-4"><use href="#rembox"/></svg><span><u>R</u>emove Layer...</span></button>
    <hr class="mt-1 mb-[3px] ml-[27px] border-t border-b border-[#e0e0e0] border-b-white" />
    <button role="menuitem" class="flex h-[22px] w-full items-center rounded-[3px] border border-[#aecff7] bg-linear-to-b from-[#f0f3f7] to-[#e6ecf5] pl-[2px]"><svg class="mr-[13px] size-4"><use href="#table"/></svg><span><u>O</u>pen Attribute Table</span></button>
    <button role="menuitem" class="flex h-[22px] w-full items-center pl-[3px]"><svg class="mr-[13px] size-4"><use href="#pencil"/></svg><span>Toggle Editing</span></button>
    <button role="menuitem" class="flex h-[22px] w-full items-center pl-[32px]"><span><u>F</u>ilter...</span></button>
    <hr class="mt-1 mb-[3px] ml-[27px] border-t border-b border-[#e0e0e0] border-b-white" />
    <button role="menuitem" class="flex h-[22px] w-full items-center pl-[32px]"><span><u>S</u>et Layer Scale Visibility...</span></button>
    <button role="menuitem" class="flex h-[22px] w-full items-center pl-[32px]">Set CRS<svg class="mr-3 ml-auto size-2"><use href="#right"/></svg></button>
    <hr class="mt-1 mb-[3px] ml-[27px] border-t border-b border-[#e0e0e0] border-b-white" />
    <button role="menuitem" class="flex h-[22px] w-full items-center pl-[3px]"><svg class="mr-[13px] size-4"><use href="#save"/></svg><span>Make Permanent...</span></button>
    <button role="menuitem" class="flex h-[22px] w-full items-center pl-[32px]">Export<svg class="mr-3 ml-auto size-2"><use href="#right"/></svg></button>
    <hr class="mt-1 mb-[3px] ml-[27px] border-t border-b border-[#e0e0e0] border-b-white" />
    <button role="menuitem" class="flex h-[22px] w-full items-center pl-[32px]">Styles<svg class="mr-3 ml-auto size-2"><use href="#right"/></svg></button>
    <button role="menuitem" class="flex h-[22px] w-full items-center pl-[32px]"><span><u>P</u>roperties...</span></button>
  </div>

  <!-- mouse pointer -->
  <svg class="absolute top-[208px] left-[330px] h-5 w-[13px]"><use href="#pointer"/></svg>
</div>
</body>
</html>
